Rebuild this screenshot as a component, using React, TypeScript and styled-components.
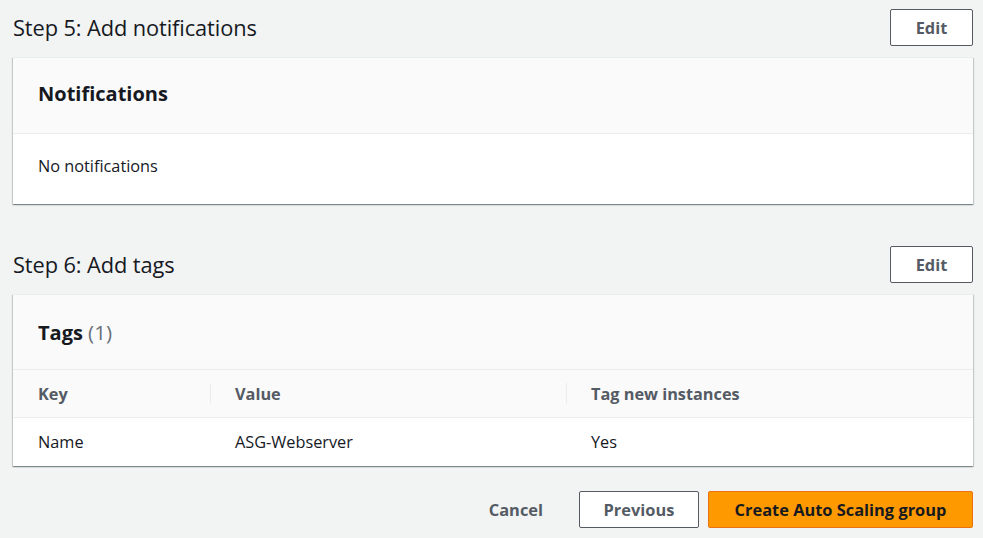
import React from "react";
import styled, { createGlobalStyle } from "styled-components";

const Global = createGlobalStyle`
  html, body { margin: 0; padding: 0; background: #f2f3f3; }
  body { font-family: "Open Sans", "Noto Sans", Arial, sans-serif; color: #16191f; }
  * { box-sizing: border-box; }
`;

const Page = styled.div`
  width: 983px;
  height: 538px;
  padding: 9px 10px 0 13px;
  display: flex;
  flex-direction: column;
  overflow: hidden;
`;

const Section = styled.section<{ $gap?: number }>`
  display: flex;
  flex-direction: column;
  margin-bottom: ${(p) => p.$gap ?? 0}px;
`;

const StepHeader = styled.div`
  display: flex;
  align-items: center;
  justify-content: space-between;
  height: 37px;
  margin-bottom: 11px;
`;

const StepTitle = styled.h2`
  margin: 0;
  font-size: 21.8px;
  font-weight: 400;
  letter-spacing: -0.1px;
  color: #16191f;
`;

const Button = styled.button<{ $variant?: "normal" | "primary" | "link"; $w?: number }>`
  height: 37px;
  width: ${(p) => (p.$w ? `${p.$w}px` : "auto")};
  padding: ${(p) => (p.$variant === "link" ? "0 26px 0 20px" : "0 20px")};
  border-radius: 2px;
  font-family: inherit;
  font-size: 16.4px;
  font-weight: 700;
  cursor: pointer;
  display: inline-flex;
  align-items: center;
  justify-content: center;
  border: 1px solid
    ${(p) => (p.$variant === "primary" ? "#ec7211" : p.$variant === "link" ? "transparent" : "#545b64")};
  background: ${(p) => (p.$variant === "primary" ? "#ff9900" : p.$variant === "link" ? "transparent" : "#ffffff")};
  color: ${(p) => (p.$variant === "primary" ? "#16191f" : "#545b64")};
`;

const Card = styled.div`
  background: #ffffff;
  border-top: 1px solid #eaeded;
  box-shadow: 0 1px 1px 0 rgba(0, 28, 36, 0.3), 1px 1px 1px 0 rgba(0, 28, 36, 0.15),
    -1px 1px 1px 0 rgba(0, 28, 36, 0.15);
`;

const CardHeader = styled.div<{ $h: number; $lift?: number }>`
  height: ${(p) => p.$h}px;
  background: #fafafa;
  border-bottom: 1px solid #eaeded;
  display: flex;
  align-items: center;
  padding: 0 25px ${(p) => p.$lift ?? 0}px;
`;

const CardTitle = styled.h3`
  margin: 0;
  font-size: 20px;
  font-weight: 700;
  color: #16191f;
`;

const Count = styled.span`
  font-weight: 400;
  font-size: 20.6px;
  color: #687078;
`;

const CardBody = styled.div`
  height: 70px;
  padding: 0 25px 7px;
  display: flex;
  align-items: center;
  font-size: 16.3px;
  color: #16191f;
`;

const Table = styled.div`
  display: grid;
  grid-template-columns: 197px 356px 1fr;
`;

const HeadCell = styled.div<{ $sep?: boolean }>`
  height: 48px;
  background: #fafafa;
  border-bottom: 1px solid #eaeded;
  display: flex;
  align-items: center;
  padding-left: 25px;
  font-size: 16.3px;
  font-weight: 700;
  color: #545b64;
  position: relative;
  &::before {
    content: "";
    display: ${(p) => (p.$sep ? "block" : "none")};
    position: absolute;
    left: 0;
    top: 13px;
    bottom: 13px;
    width: 1px;
    background: #eaeded;
  }
`;

const Cell = styled.div`
  height: 48px;
  display: flex;
  align-items: center;
  padding-left: 25px;
  font-size: 16.3px;
  color: #16191f;
`;

const Footer = styled.div`
  display: flex;
  justify-content: flex-end;
  align-items: center;
  gap: 9px;
  margin-top: 25px;
`;

export default function App() {
  return (
    <>
      <Global />
      <Page>
        <Section $gap={42}>
          <StepHeader>
            <StepTitle>Step 5: Add notifications</StepTitle>
            <Button $w={83}>Edit</Button>
          </StepHeader>
          <Card>
            <CardHeader $h={76} $lift={4}>
              <CardTitle>Notifications</CardTitle>
            </CardHeader>
            <CardBody>No notifications</CardBody>
          </Card>
        </Section>
        <Section>
          <StepHeader>
            <StepTitle>Step 6: Add tags</StepTitle>
            <Button $w={83}>Edit</Button>
          </StepHeader>
          <Card>
            <CardHeader $h={75}>
              <CardTitle>
                Tags <Count>(1)</Count>
              </CardTitle>
            </CardHeader>
            <Table>
              <HeadCell>Key</HeadCell>
              <HeadCell $sep>Value</HeadCell>
              <HeadCell $sep>Tag new instances</HeadCell>
              <Cell>Name</Cell>
              <Cell>ASG-Webserver</Cell>
              <Cell>Yes</Cell>
            </Table>
          </Card>
        </Section>
        <Footer>
          <Button $variant="link">Cancel</Button>
          <Button $w={120}>Previous</Button>
          <Button $variant="primary" $w={265}>Create Auto Scaling group</Button>
        </Footer>
      </Page>
    </>
  );
}
